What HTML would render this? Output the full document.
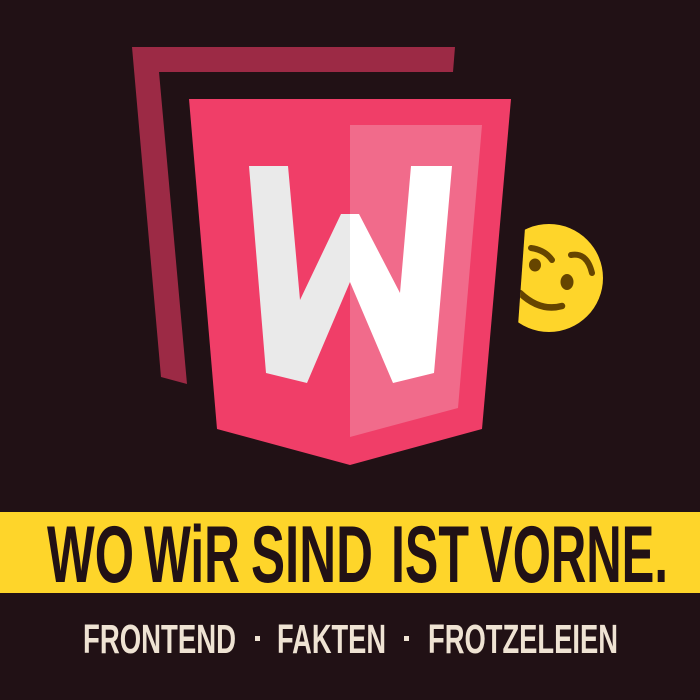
<!DOCTYPE html>
<html><head><meta charset="utf-8"><style>
html,body{margin:0;padding:0;background:#211115;width:700px;height:700px;overflow:hidden}
</style></head><body>
<svg width="700" height="700" viewBox="0 0 700 700" xmlns="http://www.w3.org/2000/svg">
<rect width="700" height="700" fill="#211115"/>
<polygon points="132,47 455,47 453,72 159,72 187,384 161,377" fill="#9c2a45"/>
<polygon points="189,99 511,99 482,429 350,465 217,429" fill="#f03e68"/>
<polygon points="350,125 482,125 458,408 350,437" fill="#f16b8b"/>
<defs>
<clipPath id="l"><rect x="0" y="0" width="350" height="700"/></clipPath>
<clipPath id="r"><rect x="350" y="0" width="350" height="700"/></clipPath>
<clipPath id="e"><polygon points="527,200 700,200 700,360 516,360 518,326"/></clipPath>
</defs>
<g>
<polygon clip-path="url(#l)" fill="#eaeaea" points="249,166 288,166 300,300 341,214 359,214 400,293 411,166 452,166 434,373 393,383 350,282 307,383 266,373"/>
<polygon clip-path="url(#r)" fill="#ffffff" points="249,166 288,166 300,300 341,214 359,214 400,293 411,166 452,166 434,373 393,383 350,282 307,383 266,373"/>
</g>
<g clip-path="url(#e)">
<circle cx="549" cy="278" r="54" fill="#fed52a"/>
<ellipse cx="535" cy="265" rx="6" ry="6.5" fill="#664500"/>
<ellipse cx="567" cy="282" rx="6.5" ry="8" fill="#664500"/>
<path d="M531,248 Q545,250 552,260" stroke="#664500" stroke-width="6" fill="none" stroke-linecap="round"/>
<path d="M571,255 Q587,252 592,273" stroke="#664500" stroke-width="6" fill="none" stroke-linecap="round"/>
<path d="M520,293 Q540,312 562,306" stroke="#664500" stroke-width="6.5" fill="none" stroke-linecap="round"/>
</g>
<rect x="0" y="512" width="700" height="81" fill="#fed52a"/>
<g font-family="'Liberation Sans Narrow','Liberation Sans',sans-serif" font-weight="bold" font-size="81" fill="#211115">
<text x="47" y="582" textLength="87" lengthAdjust="spacingAndGlyphs">WO</text>
<text x="144" y="582" textLength="96" lengthAdjust="spacingAndGlyphs">WiR</text>
<text x="251" y="582" textLength="122" lengthAdjust="spacingAndGlyphs">SIND</text>
<text x="391" y="582" textLength="78" lengthAdjust="spacingAndGlyphs">IST</text>
<text x="480" y="582" textLength="188" lengthAdjust="spacingAndGlyphs">VORNE.</text>
</g>
<g font-family="'Liberation Sans Narrow','Liberation Sans',sans-serif" font-weight="bold" font-size="41" fill="#efe3d3">
<text x="83" y="653" textLength="153" lengthAdjust="spacingAndGlyphs">FRONTEND</text>
<rect x="255" y="636" width="5" height="5"/>
<text x="277" y="653" textLength="109" lengthAdjust="spacingAndGlyphs">FAKTEN</text>
<rect x="404" y="636" width="5" height="5"/>
<text x="428" y="653" textLength="190" lengthAdjust="spacingAndGlyphs">FROTZELEIEN</text>
</g>
</svg>
</body></html>
